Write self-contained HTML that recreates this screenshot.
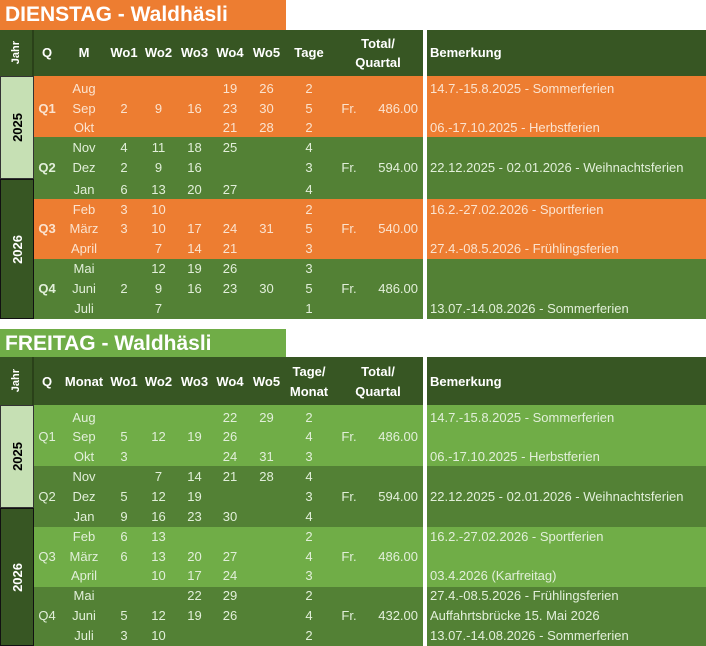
<!DOCTYPE html>
<html><head><meta charset="utf-8"><style>
*{margin:0;padding:0;box-sizing:border-box}
body{width:706px;height:646px;background:#fff;position:relative;overflow:hidden;font-family:"Liberation Sans",sans-serif;font-size:13px}
div{position:absolute}
.title{color:#fff;font-weight:bold;font-size:21px;line-height:30px;padding-left:5px}
.bg{left:0}
.hd{background:#375623;color:#fff;font-weight:bold}
.r{left:0;width:706px;height:20px;line-height:20px}
.r span{position:absolute;text-align:center}
.q{left:34px;width:26px}.m{left:60px;width:48px}.w1{left:108px;width:32px}.w2{left:140px;width:37px}.w3{left:177px;width:35px}.w4{left:212px;width:36px}.w5{left:248px;width:37px}.t{left:285px;width:48px}.fr{left:338px;width:22px}.v{left:360px;width:58px;text-align:right!important}.b{left:430px;text-align:left!important;white-space:nowrap}
.o{color:#fbe3cf}.g{color:#e2efda}
.yr{display:flex;align-items:center;justify-content:center}
.yr b{writing-mode:vertical-rl;transform:rotate(180deg);font-size:13px}
.gap{background:#fff}
</style></head><body>
<!-- TABLE 1 -->
<div class="title" style="left:0;top:0;width:286px;height:30px;background:#ed7d31">DIENSTAG - Waldhäsli</div>
<div class="hd" style="left:0;top:30px;width:706px;height:46px"></div>
<div style="left:0;top:76px;width:706px;height:61px;background:#ed7d31"></div>
<div style="left:0;top:137px;width:706px;height:62px;background:#538135"></div>
<div style="left:0;top:199px;width:706px;height:60px;background:#ed7d31"></div>
<div style="left:0;top:259px;width:706px;height:60px;background:#538135"></div>
<div class="yr hd" style="left:0;top:30px;width:34px;height:46px;border-right:2px solid #2a4119"><b style="font-size:11px">Jahr</b></div>
<div class="yr" style="left:0;top:76px;width:34px;height:103px;background:#c6e0b4;border:1px solid #333;color:#000"><b>2025</b></div>
<div class="yr" style="left:0;top:179px;width:34px;height:140px;background:#375623;border:1px solid #111;color:#fff"><b>2026</b></div>
<div class="gap" style="left:423px;top:30px;width:4px;height:289px"></div>
<div class="r" style="top:43px;color:#fff;font-weight:bold"><span class="q">Q</span><span class="m">M</span><span class="w1">Wo1</span><span class="w2">Wo2</span><span class="w3">Wo3</span><span class="w4">Wo4</span><span class="w5">Wo5</span><span class="t">Tage</span><span class="b" style="left:430px">Bemerkung</span></div>
<div class="r" style="top:34px;color:#fff;font-weight:bold"><span style="left:333px;width:90px">Total/</span></div>
<div class="r" style="top:53px;color:#fff;font-weight:bold"><span style="left:333px;width:90px">Quartal</span></div>

<div class="r o" style="top:79px"><span class="m">Aug</span><span class="w4">19</span><span class="w5">26</span><span class="t">2</span><span class="b">14.7.-15.8.2025 - Sommerferien</span></div>
<div class="r o" style="top:99px"><span class="q" style="font-weight:bold">Q1</span><span class="m">Sep</span><span class="w1">2</span><span class="w2">9</span><span class="w3">16</span><span class="w4">23</span><span class="w5">30</span><span class="t">5</span><span class="fr">Fr.</span><span class="v">486.00</span></div>
<div class="r o" style="top:118px"><span class="m">Okt</span><span class="w4">21</span><span class="w5">28</span><span class="t">2</span><span class="b">06.-17.10.2025 - Herbstferien</span></div>
<div class="r g" style="top:138px"><span class="m">Nov</span><span class="w1">4</span><span class="w2">11</span><span class="w3">18</span><span class="w4">25</span><span class="t">4</span></div>
<div class="r g" style="top:158px"><span class="q" style="font-weight:bold">Q2</span><span class="m">Dez</span><span class="w1">2</span><span class="w2">9</span><span class="w3">16</span><span class="t">3</span><span class="fr">Fr.</span><span class="v">594.00</span><span class="b">22.12.2025 - 02.01.2026 - Weihnachtsferien</span></div>
<div class="r g" style="top:180px"><span class="m">Jan</span><span class="w1">6</span><span class="w2">13</span><span class="w3">20</span><span class="w4">27</span><span class="t">4</span></div>
<div class="r o" style="top:200px"><span class="m">Feb</span><span class="w1">3</span><span class="w2">10</span><span class="t">2</span><span class="b">16.2.-27.02.2026 - Sportferien</span></div>
<div class="r o" style="top:219px"><span class="q" style="font-weight:bold">Q3</span><span class="m">März</span><span class="w1">3</span><span class="w2">10</span><span class="w3">17</span><span class="w4">24</span><span class="w5">31</span><span class="t">5</span><span class="fr">Fr.</span><span class="v">540.00</span></div>
<div class="r o" style="top:239px"><span class="m">April</span><span class="w2">7</span><span class="w3">14</span><span class="w4">21</span><span class="t">3</span><span class="b">27.4.-08.5.2026 - Frühlingsferien</span></div>
<div class="r g" style="top:259px"><span class="m">Mai</span><span class="w2">12</span><span class="w3">19</span><span class="w4">26</span><span class="t">3</span></div>
<div class="r g" style="top:279px"><span class="q" style="font-weight:bold">Q4</span><span class="m">Juni</span><span class="w1">2</span><span class="w2">9</span><span class="w3">16</span><span class="w4">23</span><span class="w5">30</span><span class="t">5</span><span class="fr">Fr.</span><span class="v">486.00</span></div>
<div class="r g" style="top:299px"><span class="m">Juli</span><span class="w2">7</span><span class="t">1</span><span class="b">13.07.-14.08.2026 - Sommerferien</span></div>

<!-- TABLE 2 -->
<div class="title" style="left:0;top:329px;width:286px;height:28px;background:#70ad47;line-height:30px">FREITAG - Waldhäsli</div>
<div class="hd" style="left:0;top:357px;width:706px;height:48px"></div>
<div style="left:0;top:405px;width:706px;height:61px;background:#70ad47"></div>
<div style="left:0;top:466px;width:706px;height:61px;background:#538135"></div>
<div style="left:0;top:527px;width:706px;height:60px;background:#70ad47"></div>
<div style="left:0;top:587px;width:706px;height:59px;background:#538135"></div>
<div class="yr hd" style="left:0;top:357px;width:34px;height:48px;border-right:2px solid #2a4119"><b style="font-size:11px">Jahr</b></div>
<div class="yr" style="left:0;top:405px;width:34px;height:103px;background:#c6e0b4;border:1px solid #333;color:#000"><b>2025</b></div>
<div class="yr" style="left:0;top:508px;width:34px;height:138px;background:#375623;border:1px solid #111;color:#fff"><b>2026</b></div>
<div class="gap" style="left:423px;top:357px;width:4px;height:289px"></div>
<div class="r" style="top:372px;color:#fff;font-weight:bold"><span class="q">Q</span><span class="m" style="left:60px;width:48px">Monat</span><span class="w1">Wo1</span><span class="w2">Wo2</span><span class="w3">Wo3</span><span class="w4">Wo4</span><span class="w5">Wo5</span><span class="b">Bemerkung</span></div>
<div class="r" style="top:362px;color:#fff;font-weight:bold"><span class="t">Tage/</span><span style="left:333px;width:90px">Total/</span></div>
<div class="r" style="top:382px;color:#fff;font-weight:bold"><span class="t">Monat</span><span style="left:333px;width:90px">Quartal</span></div>

<div class="r g" style="top:408px"><span class="m">Aug</span><span class="w4">22</span><span class="w5">29</span><span class="t">2</span><span class="b">14.7.-15.8.2025 - Sommerferien</span></div>
<div class="r g" style="top:427px"><span class="q">Q1</span><span class="m">Sep</span><span class="w1">5</span><span class="w2">12</span><span class="w3">19</span><span class="w4">26</span><span class="t">4</span><span class="fr">Fr.</span><span class="v">486.00</span></div>
<div class="r g" style="top:447px"><span class="m">Okt</span><span class="w1">3</span><span class="w4">24</span><span class="w5">31</span><span class="t">3</span><span class="b">06.-17.10.2025 - Herbstferien</span></div>
<div class="r g" style="top:467px"><span class="m">Nov</span><span class="w2">7</span><span class="w3">14</span><span class="w4">21</span><span class="w5">28</span><span class="t">4</span></div>
<div class="r g" style="top:487px"><span class="q">Q2</span><span class="m">Dez</span><span class="w1">5</span><span class="w2">12</span><span class="w3">19</span><span class="t">3</span><span class="fr">Fr.</span><span class="v">594.00</span><span class="b">22.12.2025 - 02.01.2026 - Weihnachtsferien</span></div>
<div class="r g" style="top:507px"><span class="m">Jan</span><span class="w1">9</span><span class="w2">16</span><span class="w3">23</span><span class="w4">30</span><span class="t">4</span></div>
<div class="r g" style="top:527px"><span class="m">Feb</span><span class="w1">6</span><span class="w2">13</span><span class="t">2</span><span class="b">16.2.-27.02.2026 - Sportferien</span></div>
<div class="r g" style="top:547px"><span class="q">Q3</span><span class="m">März</span><span class="w1">6</span><span class="w2">13</span><span class="w3">20</span><span class="w4">27</span><span class="t">4</span><span class="fr">Fr.</span><span class="v">486.00</span></div>
<div class="r g" style="top:566px"><span class="m">April</span><span class="w2">10</span><span class="w3">17</span><span class="w4">24</span><span class="t">3</span><span class="b">03.4.2026 (Karfreitag)</span></div>
<div class="r g" style="top:586px"><span class="m">Mai</span><span class="w3">22</span><span class="w4">29</span><span class="t">2</span><span class="b">27.4.-08.5.2026 - Frühlingsferien</span></div>
<div class="r g" style="top:606px"><span class="q">Q4</span><span class="m">Juni</span><span class="w1">5</span><span class="w2">12</span><span class="w3">19</span><span class="w4">26</span><span class="t">4</span><span class="fr">Fr.</span><span class="v">432.00</span><span class="b">Auffahrtsbrücke 15. Mai 2026</span></div>
<div class="r g" style="top:626px"><span class="m">Juli</span><span class="w1">3</span><span class="w2">10</span><span class="t">2</span><span class="b">13.07.-14.08.2026 - Sommerferien</span></div>
</body></html>
